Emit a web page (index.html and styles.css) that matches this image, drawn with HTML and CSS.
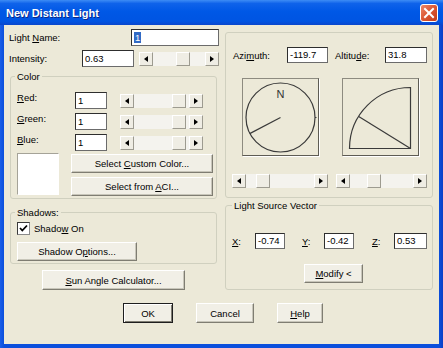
FILE: index.html
```html
<!DOCTYPE html>
<html lang="en">
<head>
    <meta charset="UTF-8">
    <title>New Distant Light</title>
    <link rel="stylesheet" href="styles.css">
</head>
<body>
<div class="window">
    <div class="titlebar">
        <span class="title">New Distant Light</span>
        <span class="close">
            <svg width="18" height="18" viewBox="0 0 18 18">
                <defs>
                    <linearGradient id="closeFill" x1="0" y1="0" x2="1" y2="1">
                        <stop offset="0" stop-color="#ED8A6C"/>
                        <stop offset="0.5" stop-color="#DB5633"/>
                        <stop offset="1" stop-color="#C23A16"/>
                    </linearGradient>
                </defs>
                <rect x="0.5" y="0.5" width="17" height="17" rx="2.5" fill="url(#closeFill)" stroke="#fff" stroke-width="1"/>
                <path d="M5 5 L13 13 M13 5 L5 13" stroke="#fff" stroke-width="2" stroke-linecap="square"/>
            </svg>
        </span>
    </div>

    <div class="content">
        <div class="main">
            <div class="col-left">
                <div class="row name-row">
                    <span class="label">Light <u>N</u>ame:</span>
                    <div class="field name-field"><span class="selected">1</span></div>
                </div>
                <div class="row intensity-row">
                    <span class="label intensity-label">Intensity:</span>
                    <div class="field intensity-field">0.63</div>
                    <div class="scroll intensity-scroll">
                        <span class="arrow left"></span>
                        <span class="track"><span class="thumb" style="margin-left: 23px"></span></span>
                        <span class="arrow right"></span>
                    </div>
                </div>

                <fieldset class="group color-group">
                    <legend>Color</legend>
                    <div class="rgb">
                        <span class="label"><u>R</u>ed:</span>
                        <div class="field">1</div>
                        <div class="scroll rgb-scroll">
                            <span class="arrow left"></span>
                            <span class="track"><span class="thumb" style="margin-left: 38px"></span></span>
                            <span class="arrow right"></span>
                        </div>
                        <span class="label"><u>G</u>reen:</span>
                        <div class="field">1</div>
                        <div class="scroll rgb-scroll">
                            <span class="arrow left"></span>
                            <span class="track"><span class="thumb" style="margin-left: 38px"></span></span>
                            <span class="arrow right"></span>
                        </div>
                        <span class="label"><u>B</u>lue:</span>
                        <div class="field">1</div>
                        <div class="scroll rgb-scroll">
                            <span class="arrow left"></span>
                            <span class="track"><span class="thumb" style="margin-left: 38px"></span></span>
                            <span class="arrow right"></span>
                        </div>
                    </div>
                    <div class="swatch-row">
                        <div class="swatch"></div>
                        <div class="swatch-buttons">
                            <button class="btn">Select <u>C</u>ustom Color...</button>
                            <button class="btn">Select from <u>A</u>CI...</button>
                        </div>
                    </div>
                </fieldset>

                <fieldset class="group shadow-group">
                    <legend>Shadows:</legend>
                    <div class="check-row">
                        <span class="checkbox">
                            <svg width="11" height="11" viewBox="0 0 11 11">
                                <path d="M2 5 L4.3 7.5 L9 2.5" fill="none" stroke="#000" stroke-width="1.8"/>
                            </svg>
                        </span>
                        <span>Shado<u>w</u> On</span>
                    </div>
                    <button class="btn shadow-btn">Shadow O<u>p</u>tions...</button>
                </fieldset>

                <button class="btn sun-btn"><u>S</u>un Angle Calculator...</button>
            </div>

            <div class="col-right">
                <div class="panel">
                    <div class="row angle-row">
                        <span class="label azimuth-label">Azi<u>m</u>uth:</span>
                        <div class="field azimuth-field">-119.7</div>
                        <span class="label altitude-label">Altitu<u>d</u>e:</span>
                        <div class="field altitude-field">31.8</div>
                    </div>
                    <div class="dials">
                        <div class="dial">
                            <svg width="75" height="76" viewBox="0 0 75 76">
                                <circle cx="37.5" cy="38.5" r="34.5" fill="none" stroke="#3a3a3a" stroke-width="1.2"/>
                                <line x1="37.5" y1="38.5" x2="6.7" y2="54.6" stroke="#3a3a3a" stroke-width="1.2"/>
                                <line x1="72" y1="38.5" x2="73.5" y2="38.5" stroke="#3a3a3a" stroke-width="1.2"/>
                                <text x="37.5" y="19" text-anchor="middle" class="dial-text">N</text>
                            </svg>
                        </div>
                        <div class="dial">
                            <svg width="75" height="76" viewBox="0 0 75 76">
                                <path d="M6.5 69.5 A61 61 0 0 1 67.5 8.5 L67.5 69.5 Z" fill="none" stroke="#3a3a3a" stroke-width="1.2"/>
                                <line x1="67.5" y1="69.5" x2="15.7" y2="37.4" stroke="#3a3a3a" stroke-width="1.2"/>
                            </svg>
                        </div>
                    </div>
                    <div class="dial-scrolls">
                        <div class="scroll azimuth-scroll">
                            <span class="arrow left"></span>
                            <span class="track"><span class="thumb" style="margin-left: 10px"></span></span>
                            <span class="arrow right"></span>
                        </div>
                        <div class="scroll altitude-scroll">
                            <span class="arrow left"></span>
                            <span class="track"><span class="thumb" style="margin-left: 17px"></span></span>
                            <span class="arrow right"></span>
                        </div>
                    </div>
                </div>

                <fieldset class="group vector-group">
                    <legend>Light Source Vector</legend>
                    <div class="row vector-row">
                        <span class="label x-label"><u>X</u>:</span>
                        <div class="field vec-field">-0.74</div>
                        <span class="label y-label"><u>Y</u>:</span>
                        <div class="field vec-field">-0.42</div>
                        <span class="label z-label"><u>Z</u>:</span>
                        <div class="field vec-field z-field">0.53</div>
                    </div>
                    <button class="btn modify-btn"><u>M</u>odify &lt;</button>
                </fieldset>
            </div>
        </div>

        <div class="actions">
            <button class="btn default ok-btn">OK</button>
            <button class="btn cancel-btn">Cancel</button>
            <button class="btn help-btn"><u>H</u>elp</button>
        </div>
    </div>
</div>
</body>
</html>
```

FILE: styles.css
```css
/* Reset */
* {
    box-sizing: border-box;
}

body {
    margin: 0;
    padding: 0;
    font-family: "Liberation Sans", Arial, sans-serif;
    font-size: 9.5px;
    color: #000;
}

u {
    text-decoration-thickness: 1px;
    text-underline-offset: 1px;
}

/* Window frame */
.window {
    width: 443px;
    height: 348px;
    display: flex;
    flex-direction: column;
    background: linear-gradient(to right, #1a5ee8 0, #0b4fdc 4px, #0b4fdc 439px, #0a3fc4 443px);
}

.titlebar {
    height: 25px;
    display: flex;
    align-items: center;
    padding: 0 5px 0 6px;
    background: linear-gradient(to bottom, #3d8cf5 0%, #0f63ea 14%, #0058e6 45%, #0054e2 85%, #0a46cc 100%);
}

.title {
    flex: 1;
    color: #fff;
    font-weight: bold;
    font-size: 11px;
    padding-top: 1px;
    text-shadow: 1px 1px 0 #0a2a8a;
}

.close {
    display: flex;
    width: 18px;
    height: 18px;
}

.content {
    flex: 1;
    margin: 0 4px 4px;
    padding: 4px 0 0 5px;
    background-color: #ece9d8;
}

.main {
    display: flex;
    gap: 6px;
}

.col-left {
    width: 210px;
    display: flex;
    flex-direction: column;
}

.col-right {
    width: 208px;
    padding-top: 3px;
    display: flex;
    flex-direction: column;
}

/* Rows, labels and fields */
.row {
    display: flex;
    align-items: center;
    height: 17px;
}

.label {
    white-space: nowrap;
}

.field {
    height: 17px;
    padding: 0 2px;
    line-height: 15px;
    background-color: #fff;
    border: 1px solid;
    border-color: #2e2e2e #6b6b6b #6b6b6b #2e2e2e;
    white-space: nowrap;
}

.selected {
    background-color: #316ac5;
    color: #fff;
    padding: 0 1px;
}

.name-field {
    margin-left: auto;
    width: 88px;
}

.intensity-row {
    margin-top: 4px;
}

.intensity-label {
    width: 73px;
}

.intensity-field {
    width: 52px;
}

.intensity-scroll {
    margin-left: 5px;
    width: 80px;
    height: 15px;
}

/* Scroll bars */
.scroll {
    display: flex;
    height: 14px;
    background-color: #f4f3ee;
}

.arrow,
.thumb {
    width: 14px;
    flex: none;
    background-color: #efede4;
    border: 1px solid;
    border-color: #fff #9d9b90 #9d9b90 #fff;
}

.arrow {
    display: flex;
    align-items: center;
    justify-content: center;
}

.arrow::before {
    content: "";
    border-top: 3.5px solid transparent;
    border-bottom: 3.5px solid transparent;
}

.arrow.left::before {
    border-right: 4px solid #000;
}

.arrow.right::before {
    border-left: 4px solid #000;
}

.track {
    flex: 1;
    display: flex;
}

/* Group boxes */
.group {
    margin: 0;
    border: 1px solid #d0d0bf;
    border-radius: 3px;
}

.group legend {
    padding: 0 2px;
    margin-left: -2px;
    line-height: 11px;
}

.color-group {
    margin: 4px 0 0 1px;
    width: 207px;
    padding: 0 0 2px 6px;
}

.rgb {
    margin-top: 10px;
    display: grid;
    grid-template-columns: 58px 32px 96px;
    grid-auto-rows: 17px;
    row-gap: 4px;
}

.rgb-scroll {
    margin-left: 13px;
    width: 83px;
    align-self: center;
}

.swatch-row {
    margin-top: 2px;
    display: flex;
    gap: 12px;
}

.swatch {
    width: 42px;
    height: 42px;
    background-color: #fff;
    border: 1px solid;
    border-color: #a5a398 #fff #fff #a5a398;
}

.swatch-buttons {
    padding-top: 1px;
    display: flex;
    flex-direction: column;
    gap: 4px;
}

.swatch-buttons .btn {
    width: 142px;
    height: 19px;
}

.shadow-group {
    margin: 8px 0 0 1px;
    width: 207px;
    padding: 0 0 2px 6px;
}

.check-row {
    margin-top: 4px;
    display: flex;
    align-items: center;
    gap: 4px;
    height: 13px;
}

.checkbox {
    width: 13px;
    height: 13px;
    display: flex;
    align-items: center;
    justify-content: center;
    background-color: #fff;
    border: 1px solid;
    border-color: #3a3a3a #8a8a8a #8a8a8a #3a3a3a;
}

.shadow-btn {
    margin-top: 7px;
    width: 120px;
    height: 19px;
}

.sun-btn {
    margin: 6px 0 0 33px;
    width: 143px;
    height: 20px;
}

/* Buttons */
.btn {
    display: block;
    padding: 0;
    font: inherit;
    color: #000;
    background-color: #f1efe6;
    border: 1px solid;
    border-color: #fff #7f7d72 #7f7d72 #fff;
    box-shadow: inset -1px -1px 0 #c8c6ba;
}

.btn.default {
    border-color: #1e1e1e;
    box-shadow: inset 1px 1px 0 #fff, inset -1px -1px 0 #7f7d72;
}

/* Light angle panel */
.panel {
    height: 166px;
    padding: 14px 0 0 7px;
    border: 1px solid #d0d0bf;
    border-radius: 3px;
}

.angle-row {
    height: 16px;
}

.angle-row .field {
    height: 16px;
    line-height: 14px;
}

.azimuth-label {
    width: 54px;
}

.azimuth-field {
    width: 41px;
}

.altitude-label {
    margin-left: 7px;
    width: 50px;
}

.altitude-field {
    width: 42px;
}

.dials {
    margin-top: 15px;
    padding-left: 9px;
    display: flex;
    gap: 23px;
}

.dial {
    width: 77px;
    height: 78px;
    border: 1px solid;
    border-color: #8d8b80 #5e5c54 #5e5c54 #8d8b80;
    box-shadow: 1px 1px 0 #fff;
}

.dial svg {
    display: block;
}

.dial-text {
    font-family: "Liberation Sans", Arial, sans-serif;
    font-size: 11px;
    fill: #333;
}

.dial-scrolls {
    margin: 18px 0 0 -1px;
    display: flex;
    gap: 8px;
}

.azimuth-scroll {
    width: 96px;
}

.altitude-scroll {
    width: 91px;
}

/* Light source vector */
.vector-group {
    margin-top: 2px;
    width: 208px;
    height: 90px;
    padding: 0 0 0 7px;
}

.vector-group legend {
    margin-left: -1px;
}

.vector-row {
    margin-top: 22px;
    height: 16px;
}

.vector-row .field {
    height: 16px;
    line-height: 14px;
}

.x-label {
    margin-left: -1px;
    width: 23px;
}

.y-label {
    margin-left: 17px;
    width: 22px;
}

.z-label {
    margin-left: 18px;
    width: 22px;
}

.vec-field {
    width: 30px;
}

.z-field {
    width: 33px;
}

.modify-btn {
    margin: 15px 0 0 71px;
    width: 59px;
    height: 19px;
}

/* Dialog buttons */
.actions {
    margin-top: 13px;
    padding-left: 114px;
    display: flex;
    gap: 23px;
}

.actions .btn {
    height: 20px;
}

.ok-btn {
    width: 50px;
}

.cancel-btn {
    width: 58px;
}

.help-btn {
    width: 46px;
}
```
